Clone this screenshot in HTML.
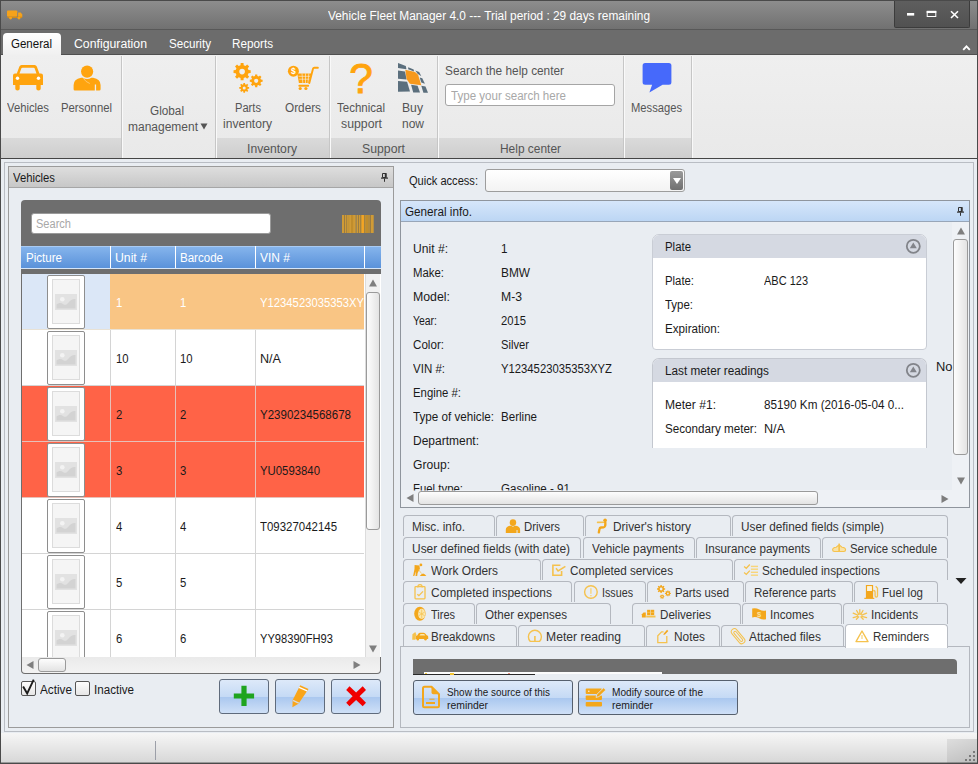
<!DOCTYPE html>
<html lang="en"><head><meta charset="utf-8"><title>Vehicle Fleet Manager 4.0</title>
<style>
html,body{margin:0;padding:0;background:#e9edf2;}
#app{position:relative;width:978px;height:764px;overflow:hidden;background:#e9edf2;font-family:"Liberation Sans",sans-serif;font-size:12px;}
#app div,#app span.t,#app svg{position:absolute;box-sizing:border-box;}
.t{white-space:nowrap;line-height:16px;transform-origin:0 50%;display:block;}
.sep{width:1px;top:56px;height:102px;background:#c6c6c6;}
.sep:after{content:"";position:absolute;left:1px;top:0;width:1px;height:102px;background:#f9f9f9;}
.band{top:138px;height:20px;background:linear-gradient(#dadada,#cecece);}
.tab{height:21px;border:1px solid #b4b8bf;border-bottom:none;border-radius:4px 4px 0 0;background:#e9edf2;}
.btn{border:1px solid #5f6b7c;border-radius:3px;background:linear-gradient(#dde9f9 0%,#c5daf5 50%,#a9c7ef 51%,#cfe0f7 100%);}
.row{left:22px;width:342px;height:56px;}
.pic{left:25px;top:1px;width:38px;height:54px;background:#fff;border:1px solid #8e8e8e;border-radius:2px;}
.pic i{position:absolute;box-sizing:border-box;left:4px;top:3px;width:28px;height:45px;background:#f5f5f5;border:1px solid #dcdcdc;}
.pic svg{left:7px;top:18px;}
.vl{top:0;width:1px;height:56px;background:rgba(150,150,150,.45);}
.hl{left:0;bottom:0;height:1px;width:342px;background:rgba(150,150,150,.35);}
.chk{width:15px;height:15px;border:1px solid #555;border-radius:2px;background:linear-gradient(#fdfdfd,#e6e6e6);}

</style></head>
<body>
<div id="app">
<!-- window chrome -->
<div style="left:0;top:0;width:978px;height:30px;background:linear-gradient(#8e8e8e,#707070);"></div>
<div style="left:0;top:29px;width:978px;height:1px;background:#585858;"></div>
<div style="left:0;top:30px;width:978px;height:25px;background:#6c6c6c;"></div>
<div style="left:894px;top:0;width:76px;height:28px;background:linear-gradient(#5f5f5f,#515151);border:1px solid #3c3c3c;border-top:none;border-radius:0 0 2px 2px;"></div>
<svg style="left:894px;top:0" width="76" height="28" viewBox="894 0 76 28"><rect x="907" y="13" width="7.200" height="2.600" fill="#fff"/><rect x="927.200" y="11.500" width="8.600" height="5" fill="none" stroke="#fff" stroke-width="1"/><rect x="926.700" y="10.800" width="9.600" height="2.200" fill="#fff"/><path d="M951 11.200l7 6.800M958 11.200l-7 6.800" stroke="#fff" stroke-width="1.600"/></svg>
<svg style="left:960px;top:43px" width="13" height="9" viewBox="960 43 13 9"><path d="M963.200 49.800l3.300-3.500 3.300 3.500" fill="none" stroke="#fff" stroke-width="1.900"/></svg>
<div style="left:0;top:54px;width:978px;height:1px;background:#505050;"></div>
<!-- truck logo -->
<svg style="left:7px;top:10px" width="16" height="10" viewBox="0 0 18 12" preserveAspectRatio="none"><rect x="0" y="0.500" width="11.500" height="7.500" rx="1" fill="#f5a21b"/><path d="M12.500 3h3l1.700 2.500V8.500h-4.700z" fill="#f5a21b"/><rect x="0.500" y="8" width="16.500" height="1.500" fill="#d98a10"/><circle cx="4" cy="9.700" r="1.700" fill="#f5a21b"/><circle cx="13.500" cy="9.700" r="1.700" fill="#f5a21b"/></svg>
<!-- ribbon -->
<div style="left:1px;top:55px;width:976px;height:103px;background:linear-gradient(#efefef,#e9e9e9);"></div>
<div style="left:3px;top:33px;width:58px;height:23px;background:linear-gradient(#ffffff,#efefef);border-radius:4px 4px 0 0;"></div>
<div class="band" style="left:1px;width:120px;"></div>
<div class="band" style="left:217px;width:112px;"></div>
<div class="band" style="left:331px;width:106px;"></div>
<div class="band" style="left:439px;width:184px;"></div>
<div class="band" style="left:625px;width:66px;"></div>
<div class="sep" style="left:121px;"></div>
<div class="sep" style="left:215px;"></div>
<div class="sep" style="left:329px;"></div>
<div class="sep" style="left:437px;"></div>
<div class="sep" style="left:623px;"></div>
<div class="sep" style="left:691px;"></div>
<div style="left:0;top:158px;width:978px;height:1px;background:#454545;"></div>
<div style="left:445px;top:84px;width:170px;height:22px;background:#fff;border:1px solid #a5a5a5;border-radius:3px;"></div>
<svg style="left:200px;top:123px" width="8" height="7" viewBox="0 0 8 7"><path d="M0.500 0.500h7L4 6.500z" fill="#555"/></svg>
<svg style="left:0;top:0" width="700" height="100" viewBox="0 0 700 100"><path d="M13 75.500q0-2 2-2h1.800l2.600-7q.6-1.500 2.200-1.500h13q1.600 0 2.200 1.500l2.600 7h1.600q2 0 2 2V85h-2.300v3.700q0 1.800-2.200 1.800t-2.200-1.800V85H19.700v3.700q0 1.800-2.200 1.800t-2.200-1.800V85H13zM19.500 73.500h17l-1.900-5.200q-.3-.6-1-.6H22.400q-.7 0-1 .6z" fill="#ffa40e" fill-rule="evenodd"/><circle cx="17.500" cy="78.300" r="1.700" fill="#fff"/><circle cx="38.500" cy="78.300" r="1.700" fill="#fff"/><circle cx="87.100" cy="71.600" r="6.100" fill="#ffa40e"/><path d="M75 90.600q-1.400 0-1.400-1.400v-4.200q0-6 7.500-7.300h1.700q4.300 2.800 8.600 0h1.700q7.500 1.300 7.500 7.300v4.200q0 1.400-1.400 1.400h-3.100v-6h-1.300v6z" fill="#ffa40e"/><path d="M83.300 78.300q2.500 3.800 6.500 5.200" fill="none" stroke="#ffe9c4" stroke-width=".5"/><path d="M248.51 70.01L250.68 70.17L250.68 73.03L248.51 73.19L247.75 75.00L249.18 76.66L247.16 78.68L245.50 77.25L243.69 78.01L243.53 80.18L240.67 80.18L240.51 78.01L238.70 77.25L237.04 78.68L235.02 76.66L236.45 75.00L235.69 73.19L233.52 73.03L233.52 70.17L235.69 70.01L236.45 68.20L235.02 66.54L237.04 64.52L238.70 65.95L240.51 65.19L240.67 63.02L243.53 63.02L243.69 65.19L245.50 65.95L247.16 64.52L249.18 66.54L247.75 68.20zM239.30 71.60a2.80 2.80 0 1 0 5.60 0a2.80 2.80 0 1 0 -5.60 0z" fill="#ffa40e" fill-rule="evenodd"/><path d="M260.96 79.62L262.61 79.73L262.61 81.87L260.96 81.98L260.40 83.33L261.49 84.58L259.98 86.09L258.73 85.00L257.38 85.56L257.27 87.21L255.13 87.21L255.02 85.56L253.67 85.00L252.42 86.09L250.91 84.58L252.00 83.33L251.44 81.98L249.79 81.87L249.79 79.73L251.44 79.62L252.00 78.27L250.91 77.02L252.42 75.51L253.67 76.60L255.02 76.04L255.13 74.39L257.27 74.39L257.38 76.04L258.73 76.60L259.98 75.51L261.49 77.02L260.40 78.27zM254.10 80.80a2.10 2.10 0 1 0 4.20 0a2.10 2.10 0 1 0 -4.20 0z" fill="#ffa40e" fill-rule="evenodd"/><path d="M247.79 87.01L249.13 87.08L249.13 88.72L247.79 88.79L247.37 89.81L248.27 90.81L247.11 91.97L246.11 91.07L245.09 91.49L245.02 92.83L243.38 92.83L243.31 91.49L242.29 91.07L241.29 91.97L240.13 90.81L241.03 89.81L240.61 88.79L239.27 88.72L239.27 87.08L240.61 87.01L241.03 85.99L240.13 84.99L241.29 83.83L242.29 84.73L243.31 84.31L243.38 82.97L245.02 82.97L245.09 84.31L246.11 84.73L247.11 83.83L248.27 84.99L247.37 85.99zM242.70 87.90a1.50 1.50 0 1 0 3.00 0a1.50 1.50 0 1 0 -3.00 0z" fill="#ffa40e" fill-rule="evenodd"/><circle cx="293.400" cy="71.200" r="5.500" fill="#ffa40e"/><text x="293.400" y="74.300" font-family="Liberation Sans,sans-serif" font-size="8.500" font-weight="bold" fill="#fff" text-anchor="middle">$</text><path d="M297.300 73.400h14.600l-2.600 9.600h-10.400z" fill="#ffa40e"/><path d="M298.500 76.300h12.500M299.200 79.200h11M302 73.400l.8 9.600M305.500 73.400v9.600M308.800 73.400l-.8 9.600" stroke="#f3f3f3" stroke-width=".6" fill="none"/><path d="M308.200 85.700H299.300M309.300 83l3.700-14.300q.3-1 1.300-1h3.600" stroke="#ffa40e" stroke-width="1.900" fill="none" stroke-linecap="round"/><circle cx="300.200" cy="88.500" r="1.600" fill="#ffa40e"/><circle cx="305.900" cy="88.500" r="1.600" fill="#ffa40e"/><text transform="translate(361.100 92.900) scale(1.010 1)" font-family="Liberation Sans,sans-serif" font-size="42" fill="#ffa40e" stroke="#ffa40e" stroke-width=".9" text-anchor="middle">?</text><g fill="#5b6f7d"><path d="M398 63l7.800 3.100 .6 3.200L398 68z"/><path d="M408.200 67.200l5.500 2.300 .3 1.900-5.800-2.100z"/><path d="M415.300 70.600l3.900 1.500 2.100 4.200-3.700-2.600z"/><path d="M398 70.600l7 1 1.600 7.900L398 78.700z"/><path d="M419.700 77.400l2.600 .8 2.600 5.500-3.600-1.100z"/><path d="M398 81l9.100 .8 2.900 9.700-12 .3z"/><path d="M411.100 84.700l6.500 1 2.400 6.900h-6.800z"/><path d="M421.300 85.700l4.200 .8 2.500 6.300h-4.600z"/></g><path d="M405.300 69.800l9.700 2.100 3.100 2.900 3.200 10.400-11.500-1.500-3.200-4.800z" fill="#f7991c"/><path d="M645.100 63h23.800q2.500 0 2.500 2.500v16.800q0 2.500-2.500 2.500h-6.300l-13.200 7.600 2.700-7.600h-7q-2.500 0-2.500-2.500V65.500q0-2.500 2.500-2.500z" fill="#4669fb"/></svg>
<!-- content frame -->
<div style="left:4px;top:162px;width:970px;height:570px;border:1px solid #b9bdc4;"></div>
<!-- left panel -->
<div style="left:8px;top:166px;width:386px;height:562px;border:1px solid #9b9b9b;"></div>
<div style="left:9px;top:167px;width:384px;height:21px;background:linear-gradient(#dedede,#c7c7c7);border-bottom:1px solid #a6a6a6;"></div>
<svg style="left:380px;top:172px" width="9" height="11" viewBox="0 0 9 11"><path d="M2.500 1.500h3.500v4h-3.500z" fill="none" stroke="#333" stroke-width="1"/><rect x="4.800" y="1" width="1.700" height="5" fill="#333"/><rect x="1" y="5.500" width="7" height="1.200" fill="#333"/><rect x="4" y="6.500" width="1" height="3.300" fill="#333"/></svg>
<div style="left:21px;top:200px;width:360px;height:474px;background:#6e6e6e;border-radius:4px;"></div>
<div style="left:31px;top:213px;width:240px;height:21px;background:#fff;border:1px solid #9a9a9a;border-radius:3px;"></div>
<svg style="left:0;top:0" width="400" height="240" viewBox="0 0 400 240"><rect x="342" y="215" width="31.700" height="18" fill="#d09b36"/><rect x="344.2" y="215" width="0.8" height="18" fill="#8c7445"/><rect x="346.4" y="215" width="0.7" height="18" fill="#8c7445"/><rect x="348.6" y="215" width="0.6" height="18" fill="#b08a3c"/><rect x="351.0" y="215" width="2.2" height="18" fill="#c08d2c"/><rect x="355.4" y="215" width="1.6" height="18" fill="#a3864c"/><rect x="358.1" y="215" width="0.8" height="18" fill="#8c7445"/><rect x="360.4" y="215" width="0.9" height="18" fill="#8c7445"/><rect x="361.6" y="215" width="2.3" height="18" fill="#f3a524"/><rect x="364.4" y="215" width="0.9" height="18" fill="#8c7445"/><rect x="366.0" y="215" width="2.0" height="18" fill="#c08d2c"/><rect x="368.6" y="215" width="0.8" height="18" fill="#8c7445"/><rect x="370.2" y="215" width="0.8" height="18" fill="#8c7445"/></svg>
<div style="left:21px;top:246px;width:360px;height:23px;background:linear-gradient(#85b4ec,#5a92da);border-top:1px solid #a9cbf3;border-bottom:1px solid #d5e5f8;"></div>
<div style="left:110px;top:246px;width:1px;height:22px;background:#fff;"></div>
<div style="left:175px;top:246px;width:1px;height:22px;background:#fff;"></div>
<div style="left:255px;top:246px;width:1px;height:22px;background:#fff;"></div>
<div style="left:364px;top:246px;width:1px;height:22px;background:#fff;"></div>
<div style="left:22px;top:274px;width:359px;height:383px;background:#fff;overflow:hidden;" id="grid">
<div class="row" style="left:0;top:0px;background:#f9c584;"><div style="left:0;top:0;width:88px;height:56px;background:#dbe7f7;"></div><div class="vl" style="left:88px;background:rgba(255,255,255,0);"></div><div class="vl" style="left:153px;background:rgba(255,255,255,0);"></div><div class="vl" style="left:233px;background:rgba(255,255,255,0);"></div><div class="hl" style="background:#e9e2d5;"></div><div class="pic"><i></i><svg width="22" height="16" viewBox="0 0 22 16"><rect width="22" height="16" fill="#e2e2e2"/><circle cx="7.300" cy="5.300" r="2.300" fill="#f3f3f3"/><path d="M1.500 10.500c2.500-2 4.500-2 6.500-.5s3.500 1 5.500-1.500 4.500-4 7-3.500V14.500h-19z" fill="#d3d3d3"/></svg></div></div>
<div class="row" style="left:0;top:56px;background:#fff;"><div style="left:0;top:0;width:88px;height:56px;background:#fff;"></div><div class="vl" style="left:88px;background:#d4d4d4;"></div><div class="vl" style="left:153px;background:#d4d4d4;"></div><div class="vl" style="left:233px;background:#d4d4d4;"></div><div class="hl" style="background:#d4d4d4;"></div><div class="pic"><i></i><svg width="22" height="16" viewBox="0 0 22 16"><rect width="22" height="16" fill="#e2e2e2"/><circle cx="7.300" cy="5.300" r="2.300" fill="#f3f3f3"/><path d="M1.500 10.500c2.500-2 4.500-2 6.500-.5s3.500 1 5.500-1.500 4.500-4 7-3.500V14.500h-19z" fill="#d3d3d3"/></svg></div></div>
<div class="row" style="left:0;top:112px;background:#ff6347;"><div style="left:0;top:0;width:88px;height:56px;background:#ff6347;"></div><div class="vl" style="left:88px;background:rgba(225,215,212,.8);"></div><div class="vl" style="left:153px;background:rgba(225,215,212,.8);"></div><div class="vl" style="left:233px;background:rgba(225,215,212,.8);"></div><div class="hl" style="background:rgba(225,215,212,.8);"></div><div class="pic"><i></i><svg width="22" height="16" viewBox="0 0 22 16"><rect width="22" height="16" fill="#e2e2e2"/><circle cx="7.300" cy="5.300" r="2.300" fill="#f3f3f3"/><path d="M1.500 10.500c2.500-2 4.500-2 6.500-.5s3.500 1 5.500-1.500 4.500-4 7-3.500V14.500h-19z" fill="#d3d3d3"/></svg></div></div>
<div class="row" style="left:0;top:168px;background:#ff6347;"><div style="left:0;top:0;width:88px;height:56px;background:#ff6347;"></div><div class="vl" style="left:88px;background:rgba(225,215,212,.8);"></div><div class="vl" style="left:153px;background:rgba(225,215,212,.8);"></div><div class="vl" style="left:233px;background:rgba(225,215,212,.8);"></div><div class="hl" style="background:rgba(225,215,212,.8);"></div><div class="pic"><i></i><svg width="22" height="16" viewBox="0 0 22 16"><rect width="22" height="16" fill="#e2e2e2"/><circle cx="7.300" cy="5.300" r="2.300" fill="#f3f3f3"/><path d="M1.500 10.500c2.500-2 4.500-2 6.500-.5s3.500 1 5.500-1.500 4.500-4 7-3.500V14.500h-19z" fill="#d3d3d3"/></svg></div></div>
<div class="row" style="left:0;top:224px;background:#fff;"><div style="left:0;top:0;width:88px;height:56px;background:#fff;"></div><div class="vl" style="left:88px;background:#d4d4d4;"></div><div class="vl" style="left:153px;background:#d4d4d4;"></div><div class="vl" style="left:233px;background:#d4d4d4;"></div><div class="hl" style="background:#d4d4d4;"></div><div class="pic"><i></i><svg width="22" height="16" viewBox="0 0 22 16"><rect width="22" height="16" fill="#e2e2e2"/><circle cx="7.300" cy="5.300" r="2.300" fill="#f3f3f3"/><path d="M1.500 10.500c2.500-2 4.500-2 6.500-.5s3.500 1 5.500-1.500 4.500-4 7-3.500V14.500h-19z" fill="#d3d3d3"/></svg></div></div>
<div class="row" style="left:0;top:280px;background:#fff;"><div style="left:0;top:0;width:88px;height:56px;background:#fff;"></div><div class="vl" style="left:88px;background:#d4d4d4;"></div><div class="vl" style="left:153px;background:#d4d4d4;"></div><div class="vl" style="left:233px;background:#d4d4d4;"></div><div class="hl" style="background:#d4d4d4;"></div><div class="pic"><i></i><svg width="22" height="16" viewBox="0 0 22 16"><rect width="22" height="16" fill="#e2e2e2"/><circle cx="7.300" cy="5.300" r="2.300" fill="#f3f3f3"/><path d="M1.500 10.500c2.500-2 4.500-2 6.500-.5s3.500 1 5.500-1.500 4.500-4 7-3.500V14.500h-19z" fill="#d3d3d3"/></svg></div></div>
<div class="row" style="left:0;top:336px;background:#fff;"><div style="left:0;top:0;width:88px;height:56px;background:#fff;"></div><div class="vl" style="left:88px;background:#d4d4d4;"></div><div class="vl" style="left:153px;background:#d4d4d4;"></div><div class="vl" style="left:233px;background:#d4d4d4;"></div><div class="hl" style="background:#d4d4d4;"></div><div class="pic"><i></i><svg width="22" height="16" viewBox="0 0 22 16"><rect width="22" height="16" fill="#e2e2e2"/><circle cx="7.300" cy="5.300" r="2.300" fill="#f3f3f3"/><path d="M1.500 10.500c2.500-2 4.500-2 6.500-.5s3.500 1 5.500-1.500 4.500-4 7-3.500V14.500h-19z" fill="#d3d3d3"/></svg></div></div>
</div>
<div style="left:365px;top:274px;width:15px;height:383px;background:#f1f1f1;border-left:1px solid #dcdcdc;"></div>
<svg style="left:373px;top:283px;overflow:visible" width="1" height="1"><path d="M-4 3.500L0 -3.500L4 3.500z" fill="#7f7f7f"/></svg>
<svg style="left:373px;top:649px;overflow:visible" width="1" height="1"><path d="M-4 -3.500L0 3.500L4 -3.500z" fill="#7f7f7f"/></svg>
<div style="left:366px;top:292px;width:14px;height:238px;background:linear-gradient(90deg,#fdfdfd,#e3e3e3);border:1px solid #9a9a9a;border-radius:3px;"></div>
<div style="left:22px;top:657px;width:358px;height:16px;background:linear-gradient(#eaeaea,#f3f3f3);border-radius:0 0 3px 3px;"></div>
<svg style="left:30px;top:665px;overflow:visible" width="1" height="1"><path d="M3.500 -4L-3.500 0L3.500 4z" fill="#7f7f7f"/></svg>
<svg style="left:357px;top:665px;overflow:visible" width="1" height="1"><path d="M-3.500 -4L3.500 0L-3.500 4z" fill="#7f7f7f"/></svg>
<div style="left:38px;top:658px;width:28px;height:14px;background:linear-gradient(#fdfdfd,#e3e3e3);border:1px solid #9a9a9a;border-radius:3px;"></div>
<!-- checkboxes and buttons -->
<div class="chk" style="left:21px;top:681px;"></div>
<svg style="left:20px;top:676px" width="18" height="22" viewBox="20 676 18 22"><path d="M23.100 686.400l4.100 7 6.500-13.700" fill="none" stroke="#1c1c1c" stroke-width="1.900"/></svg>
<div class="chk" style="left:75px;top:681px;"></div>
<div class="btn" style="left:219px;top:679px;width:50px;height:35px;"></div>
<div class="btn" style="left:275px;top:679px;width:50px;height:35px;"></div>
<div class="btn" style="left:331px;top:679px;width:50px;height:35px;"></div>
<svg style="left:232px;top:684px" width="24" height="24" viewBox="0 0 24 24"><path d="M9.400 1.800h5.200v7.600H22.100v5.200h-7.500V22.100h-5.200v-7.500H1.800v-5.200h7.600z" fill="#1fa41f"/></svg>
<svg style="left:285px;top:680px" width="30" height="32" viewBox="285 680 30 32"><path d="M300.200 685.300l8.300 3.600-10 14.900-6.100 3.500.3-7.200z" fill="#f9a51a"/><path d="M299.100 687.400l8.000 3.500" stroke="#fff" stroke-width="1.300"/><path d="M292.900 700.400l5.900 2.700" stroke="#d9d9d9" stroke-width="1.500"/></svg>
<svg style="left:340px;top:680px" width="32" height="32" viewBox="340 680 32 32"><path d="M349.500 686.300l6.600 6.200 6.600-6.200 3.300 3.600-6.400 6.400 6.400 6.400-3.300 3.600-6.600-6.300-6.600 6.300-3.300-3.600 6.400-6.400-6.400-6.400z" fill="#f00000"/></svg>
<!-- right: quick access -->
<div style="left:485px;top:169px;width:200px;height:23px;background:linear-gradient(#fff,#f3f3f3);border:1px solid #9d9d9d;border-radius:3px;"></div>
<div style="left:670px;top:171px;width:13px;height:19px;background:linear-gradient(#9a9a9a,#707070);border-radius:2px;"></div>
<svg style="left:671.500px;top:177px" width="10" height="8" viewBox="0 0 10 8"><path d="M1 1h8L5 7z" fill="#fff"/></svg>
<!-- general info panel -->
<div style="left:400px;top:200px;width:570px;height:308px;border:1px solid #8f959d;"></div>
<div style="left:401px;top:201px;width:568px;height:21px;background:linear-gradient(#d6e6fa,#bcd6f4);border-bottom:1px solid #98a6b8;"></div>
<svg style="left:956px;top:206px" width="9" height="11" viewBox="0 0 9 11"><path d="M2.500 1.500h3.500v4h-3.500z" fill="none" stroke="#333" stroke-width="1"/><rect x="4.800" y="1" width="1.700" height="5" fill="#333"/><rect x="1" y="5.500" width="7" height="1.200" fill="#333"/><rect x="4" y="6.500" width="1" height="3.300" fill="#333"/></svg>
<!-- plate group -->
<div style="left:652px;top:234px;width:275px;height:116px;background:#fff;border:1px solid #c9cdd5;border-radius:7px 7px 4px 4px;overflow:hidden;"><div style="left:0;top:0;width:275px;height:23px;background:#d5d9e2;"></div></div>
<div style="left:652px;top:358px;width:275px;height:90px;background:#fff;border:1px solid #c3c7cf;border-radius:7px 7px 0 0;overflow:hidden;border-bottom:none;"><div style="left:0;top:0;width:275px;height:23px;background:#d5d9e2;"></div></div>
<svg style="left:905px;top:238px" width="17" height="17" viewBox="0 0 17 17"><circle cx="8.300" cy="8.300" r="6.500" fill="none" stroke="#82848a" stroke-width="1.800"/><path d="M8.300 4.500l3.500 5.700H4.800z" fill="#82848a"/></svg>
<svg style="left:905px;top:362px" width="17" height="17" viewBox="0 0 17 17"><circle cx="8.300" cy="8.300" r="6.500" fill="none" stroke="#82848a" stroke-width="1.800"/><path d="M8.300 4.500l3.500 5.700H4.800z" fill="#82848a"/></svg>
<div style="left:952px;top:222px;width:17px;height:268px;background:#eef1f5;"></div>
<svg style="left:960.5px;top:231px;overflow:visible" width="1" height="1"><path d="M-4 3.500L0 -3.500L4 3.500z" fill="#7f7f7f"/></svg>
<svg style="left:960.5px;top:481px;overflow:visible" width="1" height="1"><path d="M-4 -3.500L0 3.500L4 -3.500z" fill="#7f7f7f"/></svg>
<div style="left:953px;top:239px;width:15px;height:216px;background:linear-gradient(90deg,#fdfdfd,#e3e3e3);border:1px solid #9a9a9a;border-radius:3px;"></div>
<div style="left:401px;top:490px;width:568px;height:17px;background:#eef1f5;"></div>
<svg style="left:410px;top:498px;overflow:visible" width="1" height="1"><path d="M3.500 -4L-3.500 0L3.500 4z" fill="#7f7f7f"/></svg>
<svg style="left:944.5px;top:498.5px;overflow:visible" width="1" height="1"><path d="M-3.500 -4L3.500 0L-3.500 4z" fill="#7d7d7d"/></svg>
<div style="left:418px;top:491px;width:400px;height:14px;background:linear-gradient(#fdfdfd,#e3e3e3);border:1px solid #9a9a9a;border-radius:3px;"></div>
<!-- tabs -->
<div class="tab" style="left:403px;top:515px;width:92px;"></div>
<div class="tab" style="left:496px;top:515px;width:88px;"></div>
<div class="tab" style="left:585px;top:515px;width:146px;"></div>
<div class="tab" style="left:732px;top:515px;width:216px;"></div>
<div class="tab" style="left:403px;top:537px;width:178px;"></div>
<div class="tab" style="left:583px;top:537px;width:112px;"></div>
<div class="tab" style="left:696px;top:537px;width:125px;"></div>
<div class="tab" style="left:822px;top:537px;width:126px;"></div>
<div class="tab" style="left:403px;top:559px;width:138px;"></div>
<div class="tab" style="left:542px;top:559px;width:191px;"></div>
<div class="tab" style="left:734px;top:559px;width:214px;"></div>
<div class="tab" style="left:403px;top:581px;width:169px;"></div>
<div class="tab" style="left:574px;top:581px;width:72px;"></div>
<div class="tab" style="left:647px;top:581px;width:97px;"></div>
<div class="tab" style="left:745px;top:581px;width:108px;"></div>
<div class="tab" style="left:854px;top:581px;width:84px;"></div>
<div class="tab" style="left:403px;top:603px;width:72px;"></div>
<div class="tab" style="left:476px;top:603px;width:135px;"></div>
<div class="tab" style="left:632px;top:603px;width:109px;"></div>
<div class="tab" style="left:742px;top:603px;width:100px;"></div>
<div class="tab" style="left:843px;top:603px;width:105px;"></div>
<div class="tab" style="left:403px;top:625px;width:114px;"></div>
<div class="tab" style="left:518px;top:625px;width:127px;"></div>
<div class="tab" style="left:646px;top:625px;width:74px;"></div>
<div class="tab" style="left:721px;top:625px;width:123px;"></div>
<div class="tab" style="left:845px;top:624px;width:103px;height:24px;background:#fff;border-color:#b9bdc4;"></div>
<svg style="left:955px;top:577px" width="12" height="8" viewBox="0 0 12 8"><path d="M0.500 1h11L6 7z" fill="#222"/></svg>
<!-- tab content -->
<div style="left:400px;top:646px;width:570px;height:82px;border:1px solid #b4b8bf;border-top:none;"></div>
<div style="left:400px;top:646px;width:445px;height:1px;background:#b4b8bf;"></div>
<div style="left:948px;top:646px;width:22px;height:1px;background:#b4b8bf;"></div>
<div style="left:413px;top:659px;width:544px;height:15px;background:#6e6e6e;border-radius:0 4px 0 0;"></div>
<div style="left:424px;top:672px;width:238px;height:2px;background:#fcfcfc;"></div>
<div style="left:413px;top:674px;width:122px;height:1px;background:#2a2a2a;"></div>
<div style="left:425px;top:673px;width:2px;height:1px;background:#f5d04a;"></div>
<div style="left:450px;top:673px;width:4px;height:2px;background:#f5c535;"></div>
<div style="left:508px;top:673px;width:2px;height:1px;background:#e89080;"></div>
<div class="btn" style="left:413px;top:680px;width:160px;height:35px;border-color:#56606e;"></div>
<div class="btn" style="left:578px;top:680px;width:160px;height:35px;border-color:#56606e;"></div>
<svg style="left:400px;top:510px" width="578" height="210" viewBox="400 510 578 210"><g transform="translate(505.80 519.20) scale(0.530 0.550) translate(-73.6 -65.5)"><circle cx="87.100" cy="71.600" r="6.100" fill="#f3a71c"/><path d="M73.600 90.600v-6q0-5.500 7.800-7l2.200 0q3.500 2.800 7 0h2.200q7.800 1.500 7.800 7v6h-4.900v-5.500h-1.800v5.500z" fill="#f3a71c"/></g><circle cx="605.100" cy="520.300" r="1.800" fill="#f3a71c"/><path d="M604.800 522.300L597.600 522.400" stroke="#f5c24e" stroke-width="1.600" fill="none" stroke-linecap="round"/><path d="M605.300 522q.5 5.300-1.800 5.400l-2.600 .1q-1.200 .1-1.400 1.500l-.7 3.400" stroke="#f3a71c" stroke-width="2.300" fill="none" stroke-linecap="round" stroke-linejoin="round"/><path d="M832.600 549.800q0-2.300 3.600-2.600l2-1.600h1.800l2 1.600q3.600 .3 3.600 2.600 0 1.700-1.700 1.700h-9.600q-1.700 0-1.700-1.700z" fill="#f9e2a6" stroke="#f5c24e" stroke-width="1.100"/><rect x="838.300" y="543.600" width="1.700" height="8.400" fill="#f5c24e"/><circle cx="420.900" cy="564.900" r="1.400" fill="#f3a71c"/><path d="M414.600 565l4.800 .4 .5 3.400-2.300 4.200-.4 3h-1.700l.6-4.800-1.800 4.800h-1.200l1.400-7z" fill="#f3a71c"/><path d="M419.800 576.100q3.200-5 6.600 0z" fill="#f3a71c"/><path d="M418.500 569.500l3 4" stroke="#f5c24e" stroke-width=".7"/><path d="M561.600 571v4.200h-8.700v-10h7.500" fill="none" stroke="#f5c24e" stroke-width="1.600"/><path d="M556 568.300l2.100 2.700 7.300-4.700" fill="none" stroke="#f5c24e" stroke-width="1.500"/><path d="M744.100 566.4l2.200 1.900 3.500-3.800" fill="none" stroke="#f5c24e" stroke-width="1.300"/><path d="M744.100 572.5l2.200 1.900 3.500-3.800" fill="none" stroke="#f5c24e" stroke-width="1.300"/><rect x="750.900" y="565.7" width="7.100" height="1.400" fill="#f8d57a"/><rect x="750.900" y="568.5" width="7.100" height="1.400" fill="#f8d57a"/><rect x="750.900" y="571.6" width="7.100" height="1.400" fill="#f8d57a"/><rect x="750.900" y="574.5" width="7.100" height="1.400" fill="#f8d57a"/><rect x="415" y="586.700" width="10" height="12.200" rx=".8" fill="none" stroke="#f5c24e" stroke-width="1.300"/><path d="M417.800 587.500q0-2.800 2.200-2.800t2.200 2.800" fill="none" stroke="#f5c24e" stroke-width="1.300"/><path d="M417.300 594.200l1.600 1.400 4.100-4.200" fill="none" stroke="#f5c24e" stroke-width="1.300"/><circle cx="590.900" cy="592" r="6.300" fill="none" stroke="#f5c24e" stroke-width="1.400"/><rect x="590.200" y="588.200" width="1.400" height="5.600" fill="#f8d57a"/><rect x="590.200" y="595" width="1.400" height="1.300" fill="#f8d57a"/><path d="M664.01 588.28L665.14 588.33L665.14 589.67L664.01 589.72L663.67 590.55L664.44 591.38L663.48 592.34L662.65 591.57L661.82 591.91L661.77 593.04L660.43 593.04L660.38 591.91L659.55 591.57L658.72 592.34L657.76 591.38L658.53 590.55L658.19 589.72L657.06 589.67L657.06 588.33L658.19 588.28L658.53 587.45L657.76 586.62L658.72 585.66L659.55 586.43L660.38 586.09L660.43 584.96L661.77 584.96L661.82 586.09L662.65 586.43L663.48 585.66L664.44 586.62L663.67 587.45zM659.70 589.00a1.40 1.40 0 1 0 2.80 0a1.40 1.40 0 1 0 -2.80 0z" fill="#f3a71c" fill-rule="evenodd"/><path d="M670.04 592.87L670.86 592.91L670.86 593.89L670.04 593.93L669.78 594.53L670.34 595.14L669.64 595.84L669.03 595.28L668.43 595.54L668.39 596.36L667.41 596.36L667.37 595.54L666.77 595.28L666.16 595.84L665.46 595.14L666.02 594.53L665.76 593.93L664.94 593.89L664.94 592.91L665.76 592.87L666.02 592.27L665.46 591.66L666.16 590.96L666.77 591.52L667.37 591.26L667.41 590.44L668.39 590.44L668.43 591.26L669.03 591.52L669.64 590.96L670.34 591.66L669.78 592.27zM667.00 593.40a0.90 0.90 0 1 0 1.80 0a0.90 0.90 0 1 0 -1.80 0z" fill="#f3a71c" fill-rule="evenodd"/><path d="M663.65 596.31L664.37 596.32L664.37 597.08L663.65 597.09L663.47 597.53L663.97 598.04L663.44 598.57L662.93 598.07L662.49 598.25L662.48 598.97L661.72 598.97L661.71 598.25L661.27 598.07L660.76 598.57L660.23 598.04L660.73 597.53L660.55 597.09L659.83 597.08L659.83 596.32L660.55 596.31L660.73 595.87L660.23 595.36L660.76 594.83L661.27 595.33L661.71 595.15L661.72 594.43L662.48 594.43L662.49 595.15L662.93 595.33L663.44 594.83L663.97 595.36L663.47 595.87zM661.50 596.70a0.60 0.60 0 1 0 1.20 0a0.60 0.60 0 1 0 -1.20 0z" fill="#f3a71c" fill-rule="evenodd"/><path d="M865.900 584.900h7.200v13.200h-7.200zM867.200 586.200v4.800h4.600v-4.800z" fill="#f3a71c" fill-rule="evenodd"/><rect x="864.300" y="597.800" width="10" height="1.100" fill="#f3a71c"/><rect x="867.200" y="586.200" width="4.600" height="4.800" fill="#fdf3d6"/><path d="M873.200 590.500q1.900 0 1.900 1.800v3.500q0 1.400 1.200 1.400t1.200-1.400v-7.600l-1.800-2" fill="none" stroke="#f5c24e" stroke-width="1.300"/><ellipse cx="419.900" cy="613.800" rx="5.700" ry="7" fill="#f3a71c"/><ellipse cx="421.700" cy="613.900" rx="3.600" ry="5.100" fill="#fbe7ae"/><path d="M421.700 609.500v8.800M418.600 612l6.200 3.800M418.600 615.800l6.200-3.800" stroke="#f5c24e" stroke-width=".7"/><path d="M641.900 617.500v-3.300l1.600-1.800h2.300v5.100z" fill="#f3a71c"/><rect x="647.100" y="609.800" width="3.300" height="5.300" fill="#f3a71c"/><rect x="650.900" y="609.800" width="3.300" height="5.300" fill="#f3a71c"/><rect x="646.200" y="615.600" width="9.300" height="1.900" fill="#f5c24e"/><path d="M647.100 612.400h7.100" stroke="#f8d57a" stroke-width=".5"/><path d="M752.200 608.600q3.500-1 7 .8t6.800 1v8.800q-3.400 .8-6.800-1t-7-.8z" fill="#f3a71c"/><text x="759.100" y="617" font-family="Liberation Sans,sans-serif" font-size="7.500" font-weight="bold" fill="#fbe2a0" text-anchor="middle">$</text><path d="M857.8 615.1L853.2 613.2M857.8 616.4L853.2 617.6M858.8 614.3L856.6 610.5M859.8 614.0L859.8 609.6M860.8 614.3L863.0 610.5M861.8 615.1L866.6 613.2M861.8 616.4L866.6 617.6M858.8 616.9L856.4 619.3M860.8 616.9L863.2 619.3" stroke="#f5c24e" stroke-width="1.300" fill="none" stroke-linecap="round"/><path d="M415.500 639v-2.200q0-1 1.500-1.100l1.500-2.200q.5-.7 1.500-.7h3.500q1 0 1.700 .7l1.500 1.800q1.500 .2 1.500 1.500v2.200z" fill="#f3a71c"/><path d="M412.200 639.700l.2-5.400 2.900-2.400 1.400 3.700-1.200 1.200v3z" fill="#f5c24e"/><circle cx="417.800" cy="639.200" r="1.200" fill="#f3a71c"/><circle cx="425.500" cy="639.200" r="1.200" fill="#f3a71c"/><path d="M419.500 635.500l1-1.600h3.600l1.200 1.600z" fill="#fbe7ae"/><path d="M530.300 641.400a6.500 6.500 0 1 1 9.200 0z" fill="none" stroke="#f5c24e" stroke-width="1.400"/><rect x="534.100" y="636" width="1.600" height="5.300" fill="#f5c24e"/><path d="M666.800 636v6.700h-9v-7l3.800-3.800h2" fill="none" stroke="#f5c24e" stroke-width="1.300"/><path d="M663.800 633.600l3.300-3.800 1.200 1.100-3.300 3.700-1.600 .5z" fill="#f3a71c"/><g transform="translate(738.100 636.200) rotate(50)" fill="none" stroke="#f5c24e" stroke-width="1"><rect x="-8.800" y="-3.100" width="17.600" height="6.200" rx="3.100"/><rect x="-6" y="-1.300" width="12.500" height="2.600" rx="1.300"/></g><path d="M862 631l6 10.600h-12z" fill="none" stroke="#f5c24e" stroke-width="1.400" stroke-linejoin="round"/><rect x="861.400" y="635" width="1.200" height="4" fill="#f8d57a"/><path d="M431.500 686.800h-7q-1.500 0-1.500 1.500v17.400q0 1.500 1.500 1.500h13q1.500 0 1.500-1.500V694.300z" fill="none" stroke="#f3a71c" stroke-width="2" stroke-linejoin="round"/><path d="M431.500 686.500v6q0 1.800 1.800 1.800h6z" fill="#f3a71c"/><rect x="429.300" y="698.700" width="5.200" height="1" fill="#f3a71c"/><rect x="426" y="702" width="9" height="2" fill="#f3a71c"/><rect x="585.700" y="688.600" width="16.300" height="5.500" rx="1" fill="#f3a71c"/><rect x="585.700" y="695.600" width="16.300" height="4.300" rx=".8" fill="#f3a71c"/><rect x="585.700" y="702.100" width="16.300" height="4.300" rx=".8" fill="#f3a71c"/><circle cx="588.800" cy="691.300" r=".8" fill="#fdf3d6"/><path d="M596 697.400l.8-3 6.800-6.600 2.200 2.200-6.800 6.600z" fill="#f3a71c" stroke="#dbe7f8" stroke-width=".8"/></svg>
<!-- status bar -->
<div style="left:0;top:733px;width:978px;height:31px;background:linear-gradient(#f6f6f6,#d6d6d6);"></div>
<div style="left:155px;top:741px;width:1px;height:19px;background:#9c9fa8;"></div>
<div style="left:947px;top:739px;width:30px;height:24px;background:linear-gradient(160deg,#dedede,#bdbdbd);"></div>
<svg style="left:965px;top:751px" width="12" height="12" viewBox="0 0 12 12"><g fill="#7a7a7a"><rect x="8" y="0" width="2" height="2"/><rect x="4" y="4" width="2" height="2"/><rect x="8" y="4" width="2" height="2"/><rect x="0" y="8" width="2" height="2"/><rect x="4" y="8" width="2" height="2"/><rect x="8" y="8" width="2" height="2"/></g></svg>
<!-- window border -->
<div style="left:0;top:0;width:978px;height:764px;border:1px solid #4a4a4a;"></div>
<div style="left:1px;top:762px;width:976px;height:1px;background:rgba(60,60,60,.4);"></div>

<div id="texts">
<span class="t" style="left:328px;top:8px;color:#ffffff;font-size:12px;transform:scaleX(0.9892);">Vehicle Fleet Manager 4.0 --- Trial period : 29 days remaining</span>
<span class="t" style="left:11px;top:36px;color:#111;font-size:12px;transform:scaleX(0.9601);">General</span>
<span class="t" style="left:74px;top:36px;color:#ffffff;font-size:12px;transform:scaleX(1.0225);">Configuration</span>
<span class="t" style="left:169px;top:36px;color:#ffffff;font-size:12px;transform:scaleX(0.9686);">Security</span>
<span class="t" style="left:232px;top:36px;color:#ffffff;font-size:12px;transform:scaleX(0.9755);">Reports</span>
<span class="t" style="left:7px;top:100px;color:#555555;font-size:12px;transform:scaleX(0.9395);">Vehicles</span>
<span class="t" style="left:61px;top:100px;color:#555555;font-size:12px;transform:scaleX(0.9436);">Personnel</span>
<span class="t" style="left:150px;top:103px;color:#555555;font-size:12px;transform:scaleX(0.9802);">Global</span>
<span class="t" style="left:128px;top:119px;color:#555555;font-size:12px;transform:scaleX(0.9993);">management</span>
<span class="t" style="left:235px;top:100px;color:#555555;font-size:12px;transform:scaleX(0.9281);">Parts</span>
<span class="t" style="left:223px;top:116px;color:#555555;font-size:12px;transform:scaleX(1.0061);">inventory</span>
<span class="t" style="left:285px;top:100px;color:#555555;font-size:12px;transform:scaleX(0.9813);">Orders</span>
<span class="t" style="left:337px;top:100px;color:#555555;font-size:12px;transform:scaleX(0.9594);">Technical</span>
<span class="t" style="left:341px;top:116px;color:#555555;font-size:12px;transform:scaleX(1.0242);">support</span>
<span class="t" style="left:402px;top:100px;color:#555555;font-size:12px;transform:scaleX(1.0151);">Buy</span>
<span class="t" style="left:402px;top:116px;color:#555555;font-size:12px;transform:scaleX(0.9993);">now</span>
<span class="t" style="left:445px;top:63px;color:#555555;font-size:12px;transform:scaleX(0.9855);">Search the help center</span>
<span class="t" style="left:451px;top:88px;color:#a8a8a8;font-size:12px;transform:scaleX(0.9631);">Type your search here</span>
<span class="t" style="left:631px;top:100px;color:#555555;font-size:12px;transform:scaleX(0.9323);">Messages</span>
<span class="t" style="left:247px;top:141px;color:#555555;font-size:12px;transform:scaleX(1.0130);">Inventory</span>
<span class="t" style="left:362px;top:141px;color:#555555;font-size:12px;transform:scaleX(1.0230);">Support</span>
<span class="t" style="left:500px;top:141px;color:#555555;font-size:12px;transform:scaleX(0.9939);">Help center</span>
<span class="t" style="left:13px;top:170px;color:#1a1a1a;font-size:12px;transform:scaleX(0.9395);">Vehicles</span>
<span class="t" style="left:36px;top:216px;color:#a8a8a8;font-size:12px;transform:scaleX(0.9203);">Search</span>
<span class="t" style="left:26px;top:250px;color:#ffffff;font-size:12px;transform:scaleX(0.9636);">Picture</span>
<span class="t" style="left:115px;top:250px;color:#ffffff;font-size:12px;transform:scaleX(1.0204);">Unit #</span>
<span class="t" style="left:180px;top:250px;color:#ffffff;font-size:12px;transform:scaleX(0.9619);">Barcode</span>
<span class="t" style="left:260px;top:250px;color:#ffffff;font-size:12px;transform:scaleX(0.9995);">VIN #</span>
<span class="t" style="left:116px;top:295px;color:#ffffff;font-size:12px;transform:scaleX(0.9421);z-index:3;">1</span>
<span class="t" style="left:180px;top:295px;color:#ffffff;font-size:12px;transform:scaleX(0.9421);z-index:3;">1</span>
<span class="t" style="left:260px;top:295px;color:#ffffff;font-size:12px;transform:scaleX(0.9398);z-index:3;clip-path:inset(0 6.5% 0 0);">Y1234523035353XYZ</span>
<span class="t" style="left:116px;top:351px;color:#1a1a1a;font-size:12px;transform:scaleX(0.9432);z-index:3;">10</span>
<span class="t" style="left:180px;top:351px;color:#1a1a1a;font-size:12px;transform:scaleX(0.9432);z-index:3;">10</span>
<span class="t" style="left:260px;top:351px;color:#1a1a1a;font-size:12px;transform:scaleX(1.0492);z-index:3;">N/A</span>
<span class="t" style="left:116px;top:407px;color:#1a1a1a;font-size:12px;transform:scaleX(0.9421);z-index:3;">2</span>
<span class="t" style="left:180px;top:407px;color:#1a1a1a;font-size:12px;transform:scaleX(0.9421);z-index:3;">2</span>
<span class="t" style="left:260px;top:407px;color:#1a1a1a;font-size:12px;transform:scaleX(0.9603);z-index:3;">Y2390234568678</span>
<span class="t" style="left:116px;top:463px;color:#1a1a1a;font-size:12px;transform:scaleX(0.9421);z-index:3;">3</span>
<span class="t" style="left:180px;top:463px;color:#1a1a1a;font-size:12px;transform:scaleX(0.9421);z-index:3;">3</span>
<span class="t" style="left:260px;top:463px;color:#1a1a1a;font-size:12px;transform:scaleX(0.9465);z-index:3;">YU0593840</span>
<span class="t" style="left:116px;top:519px;color:#1a1a1a;font-size:12px;transform:scaleX(0.9421);z-index:3;">4</span>
<span class="t" style="left:180px;top:519px;color:#1a1a1a;font-size:12px;transform:scaleX(0.9421);z-index:3;">4</span>
<span class="t" style="left:260px;top:519px;color:#1a1a1a;font-size:12px;transform:scaleX(0.9536);z-index:3;">T09327042145</span>
<span class="t" style="left:116px;top:575px;color:#1a1a1a;font-size:12px;transform:scaleX(0.9421);z-index:3;">5</span>
<span class="t" style="left:180px;top:575px;color:#1a1a1a;font-size:12px;transform:scaleX(0.9421);z-index:3;">5</span>
<span class="t" style="left:116px;top:631px;color:#1a1a1a;font-size:12px;transform:scaleX(0.9421);z-index:3;">6</span>
<span class="t" style="left:180px;top:631px;color:#1a1a1a;font-size:12px;transform:scaleX(0.9421);z-index:3;">6</span>
<span class="t" style="left:260px;top:631px;color:#1a1a1a;font-size:12px;transform:scaleX(0.9272);z-index:3;">YY98390FH93</span>
<span class="t" style="left:40px;top:682px;color:#1a1a1a;font-size:12px;transform:scaleX(0.9790);">Active</span>
<span class="t" style="left:94px;top:682px;color:#1a1a1a;font-size:12px;transform:scaleX(0.9671);">Inactive</span>
<span class="t" style="left:409px;top:173px;color:#1a1a1a;font-size:12px;transform:scaleX(0.9237);">Quick access:</span>
<span class="t" style="left:405px;top:204px;color:#1a1a1a;font-size:12px;transform:scaleX(0.9750);">General info.</span>
<span class="t" style="left:413px;top:241px;color:#1a1a1a;font-size:12px;transform:scaleX(1.0090);">Unit #:</span>
<span class="t" style="left:501px;top:241px;color:#1a1a1a;font-size:12px;transform:scaleX(0.9720);">1</span>
<span class="t" style="left:413px;top:265px;color:#1a1a1a;font-size:12px;transform:scaleX(0.9484);">Make:</span>
<span class="t" style="left:501px;top:265px;color:#1a1a1a;font-size:12px;transform:scaleX(0.9888);">BMW</span>
<span class="t" style="left:413px;top:289px;color:#1a1a1a;font-size:12px;transform:scaleX(1.0269);">Model:</span>
<span class="t" style="left:501px;top:289px;color:#1a1a1a;font-size:12px;transform:scaleX(1.0159);">M-3</span>
<span class="t" style="left:413px;top:313px;color:#1a1a1a;font-size:12px;transform:scaleX(0.8698);">Year:</span>
<span class="t" style="left:501px;top:313px;color:#1a1a1a;font-size:12px;transform:scaleX(0.9362);">2015</span>
<span class="t" style="left:413px;top:337px;color:#1a1a1a;font-size:12px;transform:scaleX(0.9683);">Color:</span>
<span class="t" style="left:501px;top:337px;color:#1a1a1a;font-size:12px;transform:scaleX(0.9328);">Silver</span>
<span class="t" style="left:413px;top:361px;color:#1a1a1a;font-size:12px;transform:scaleX(0.9593);">VIN #:</span>
<span class="t" style="left:501px;top:361px;color:#1a1a1a;font-size:12px;transform:scaleX(0.9398);">Y1234523035353XYZ</span>
<span class="t" style="left:413px;top:385px;color:#1a1a1a;font-size:12px;transform:scaleX(0.9464);">Engine #:</span>
<span class="t" style="left:413px;top:409px;color:#1a1a1a;font-size:12px;transform:scaleX(0.9713);">Type of vehicle:</span>
<span class="t" style="left:501px;top:409px;color:#1a1a1a;font-size:12px;transform:scaleX(0.9636);">Berline</span>
<span class="t" style="left:413px;top:433px;color:#1a1a1a;font-size:12px;transform:scaleX(0.9995);">Department:</span>
<span class="t" style="left:413px;top:457px;color:#1a1a1a;font-size:12px;transform:scaleX(1.0085);">Group:</span>
<span class="t" style="left:413px;top:481px;color:#1a1a1a;font-size:12px;transform:scaleX(0.9487);clip-path:inset(0 0 6.5px 0);">Fuel type:</span>
<span class="t" style="left:501px;top:481px;color:#1a1a1a;font-size:12px;transform:scaleX(0.9667);clip-path:inset(0 0 6.5px 0);">Gasoline - 91</span>
<span class="t" style="left:665px;top:239px;color:#1a1a1a;font-size:12px;transform:scaleX(0.9503);">Plate</span>
<span class="t" style="left:665px;top:273px;color:#1a1a1a;font-size:12px;transform:scaleX(0.9450);">Plate:</span>
<span class="t" style="left:764px;top:273px;color:#1a1a1a;font-size:12px;transform:scaleX(0.9161);">ABC 123</span>
<span class="t" style="left:665px;top:297px;color:#1a1a1a;font-size:12px;transform:scaleX(0.9537);">Type:</span>
<span class="t" style="left:665px;top:321px;color:#1a1a1a;font-size:12px;transform:scaleX(0.9700);">Expiration:</span>
<span class="t" style="left:665px;top:363px;color:#1a1a1a;font-size:12px;transform:scaleX(0.9806);">Last meter readings</span>
<span class="t" style="left:665px;top:397px;color:#1a1a1a;font-size:12px;transform:scaleX(1.0059);">Meter #1:</span>
<span class="t" style="left:764px;top:397px;color:#1a1a1a;font-size:12px;transform:scaleX(0.9760);">85190 Km (2016-05-04 0...</span>
<span class="t" style="left:665px;top:421px;color:#1a1a1a;font-size:12px;transform:scaleX(0.9713);">Secondary meter:</span>
<span class="t" style="left:764px;top:421px;color:#1a1a1a;font-size:12px;transform:scaleX(1.0492);">N/A</span>
<span class="t" style="left:936px;top:359px;color:#1a1a1a;font-size:12px;transform:scaleX(1.0754);">No</span>
<span class="t" style="left:412px;top:519px;color:#333;font-size:12px;transform:scaleX(0.9812);">Misc. info.</span>
<span class="t" style="left:524px;top:519px;color:#333;font-size:12px;transform:scaleX(0.9474);">Drivers</span>
<span class="t" style="left:613px;top:519px;color:#333;font-size:12px;transform:scaleX(0.9877);">Driver's history</span>
<span class="t" style="left:741px;top:519px;color:#333;font-size:12px;transform:scaleX(0.9836);">User defined fields (simple)</span>
<span class="t" style="left:412px;top:541px;color:#333;font-size:12px;transform:scaleX(0.9953);">User defined fields (with date)</span>
<span class="t" style="left:592px;top:541px;color:#333;font-size:12px;transform:scaleX(0.9781);">Vehicle payments</span>
<span class="t" style="left:705px;top:541px;color:#333;font-size:12px;transform:scaleX(0.9717);">Insurance payments</span>
<span class="t" style="left:850px;top:541px;color:#333;font-size:12px;transform:scaleX(0.9520);">Service schedule</span>
<span class="t" style="left:431px;top:563px;color:#333;font-size:12px;transform:scaleX(0.9882);">Work Orders</span>
<span class="t" style="left:570px;top:563px;color:#333;font-size:12px;transform:scaleX(0.9775);">Completed services</span>
<span class="t" style="left:762px;top:563px;color:#333;font-size:12px;transform:scaleX(0.9826);">Scheduled inspections</span>
<span class="t" style="left:431px;top:585px;color:#333;font-size:12px;transform:scaleX(0.9967);">Completed inspections</span>
<span class="t" style="left:602px;top:585px;color:#333;font-size:12px;transform:scaleX(0.8937);">Issues</span>
<span class="t" style="left:675px;top:585px;color:#333;font-size:12px;transform:scaleX(0.9412);">Parts used</span>
<span class="t" style="left:754px;top:585px;color:#333;font-size:12px;transform:scaleX(0.9603);">Reference parts</span>
<span class="t" style="left:882px;top:585px;color:#333;font-size:12px;transform:scaleX(0.9601);">Fuel log</span>
<span class="t" style="left:431px;top:607px;color:#333;font-size:12px;transform:scaleX(0.9148);">Tires</span>
<span class="t" style="left:485px;top:607px;color:#333;font-size:12px;transform:scaleX(0.9679);">Other expenses</span>
<span class="t" style="left:660px;top:607px;color:#333;font-size:12px;transform:scaleX(0.9680);">Deliveries</span>
<span class="t" style="left:770px;top:607px;color:#333;font-size:12px;transform:scaleX(0.9700);">Incomes</span>
<span class="t" style="left:871px;top:607px;color:#333;font-size:12px;transform:scaleX(0.9785);">Incidents</span>
<span class="t" style="left:431px;top:629px;color:#333;font-size:12px;transform:scaleX(0.9690);">Breakdowns</span>
<span class="t" style="left:546px;top:629px;color:#333;font-size:12px;transform:scaleX(1.0129);">Meter reading</span>
<span class="t" style="left:674px;top:629px;color:#333;font-size:12px;transform:scaleX(0.9885);">Notes</span>
<span class="t" style="left:749px;top:629px;color:#333;font-size:12px;transform:scaleX(0.9993);">Attached files</span>
<span class="t" style="left:873px;top:629px;color:#333;font-size:12px;transform:scaleX(0.9650);">Reminders</span>
<span class="t" style="left:447px;top:684px;color:#1a1a1a;font-size:10.5px;transform:scaleX(0.9436);">Show the source of this</span>
<span class="t" style="left:447px;top:697px;color:#1a1a1a;font-size:10.5px;transform:scaleX(0.9894);">reminder</span>
<span class="t" style="left:612px;top:684px;color:#1a1a1a;font-size:10.5px;transform:scaleX(0.9625);">Modify source of the</span>
<span class="t" style="left:612px;top:697px;color:#1a1a1a;font-size:10.5px;transform:scaleX(0.9894);">reminder</span>
</div>
</div>
</body></html>
